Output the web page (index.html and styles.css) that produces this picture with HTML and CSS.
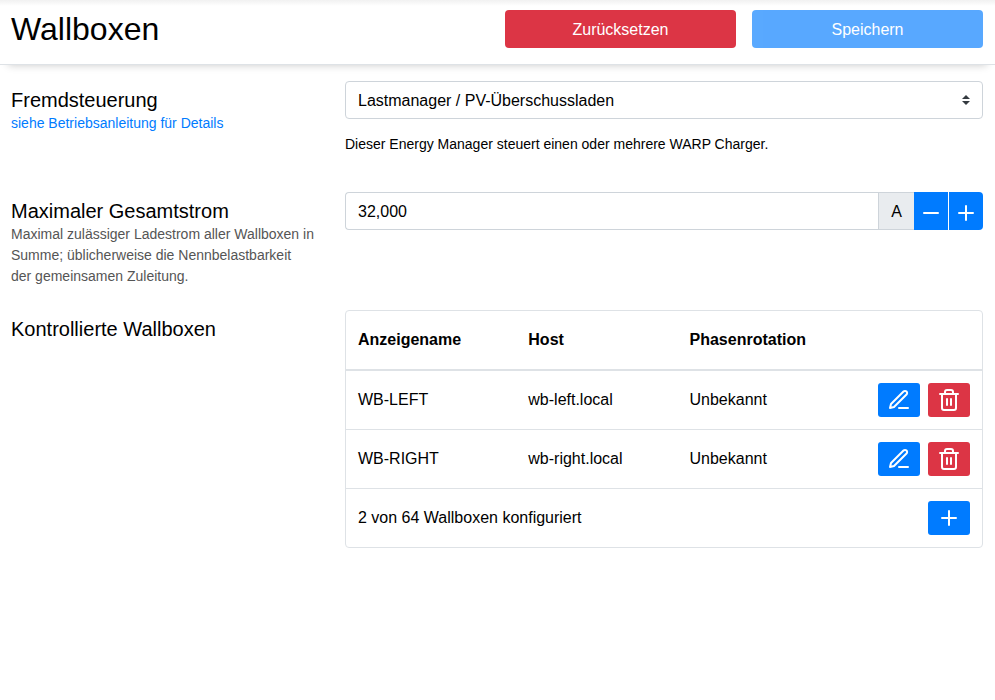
FILE: index.html
```html
<!DOCTYPE html>
<html lang="de">
<head>
<meta charset="utf-8">
<title>Wallboxen</title>
<link rel="stylesheet" href="styles.css">
</head>
<body>
<svg width="0" height="0" class="sprite" aria-hidden="true">
  <symbol id="pen" viewBox="0 0 24 24"><path d="M12 20h9"/><path d="M16.5 3.5a2.121 2.121 0 0 1 3 3L7 19l-4 1 1-4L16.5 3.5z"/></symbol>
  <symbol id="trash" viewBox="0 0 24 24"><path d="M3 6h18M19 6v14a2 2 0 0 1-2 2H7a2 2 0 0 1-2-2V6m3 0V4a2 2 0 0 1 2-2h4a2 2 0 0 1 2 2v2M10 11v6M14 11v6"/></symbol>
  <symbol id="plus" viewBox="0 0 24 24"><path d="M12 5v14M5 12h14"/></symbol>
  <symbol id="minus" viewBox="0 0 24 24"><path d="M5 12h14"/></symbol>
</svg>
<header class="header">
  <h1>Wallboxen</h1>
  <div class="actions">
    <button class="btn danger">Zurücksetzen</button>
    <button class="btn primary disabled">Speichern</button>
  </div>
</header>
<main>
  <section class="row mode">
    <div class="label"><h2>Fremdsteuerung</h2><a class="link" href="#">siehe Betriebsanleitung für Details</a></div>
    <div class="field">
      <div class="control select"><span>Lastmanager / PV-Überschussladen</span>
        <svg width="8" height="10" viewBox="0 0 4 5"><path d="M2 0L0 2h4zm0 5L0 3h4z"/></svg>
      </div>
      <p class="note">Dieser Energy Manager steuert einen oder mehrere WARP Charger.</p>
    </div>
  </section>
  <section class="row current">
    <div class="label"><h2>Maximaler Gesamtstrom</h2><p class="help">Maximal zulässiger Ladestrom aller Wallboxen in Summe; üblicherweise die Nennbelastbarkeit der gemeinsamen Zuleitung.</p></div>
    <div class="field group">
      <div class="control value">32,000</div>
      <div class="unit">A</div>
      <button class="step primary" aria-label="Verringern"><svg class="icon"><use href="#minus"/></svg></button>
      <button class="step primary" aria-label="Erhöhen"><svg class="icon"><use href="#plus"/></svg></button>
    </div>
  </section>
  <section class="row">
    <div class="label"><h2>Kontrollierte Wallboxen</h2></div>
    <div class="field table">
      <div class="tr head"><span>Anzeigename</span><span>Host</span><span>Phasenrotation</span></div>
      <div class="tr"><span>WB-LEFT</span><span>wb-left.local</span><span>Unbekannt</span>
        <div class="tools"><button class="tool primary" aria-label="Bearbeiten"><svg class="icon"><use href="#pen"/></svg></button><button class="tool danger" aria-label="Löschen"><svg class="icon"><use href="#trash"/></svg></button></div></div>
      <div class="tr"><span>WB-RIGHT</span><span>wb-right.local</span><span>Unbekannt</span>
        <div class="tools"><button class="tool primary" aria-label="Bearbeiten"><svg class="icon"><use href="#pen"/></svg></button><button class="tool danger" aria-label="Löschen"><svg class="icon"><use href="#trash"/></svg></button></div></div>
      <div class="tr foot"><span>2 von 64 Wallboxen konfiguriert</span>
        <div class="tools"><button class="tool primary" aria-label="Hinzufügen"><svg class="icon"><use href="#plus"/></svg></button></div></div>
    </div>
  </section>
</main>
</body>
</html>
```
FILE: styles.css
```css
* { box-sizing: border-box; }
body { margin: 0; background: #fff; color: #000; font: 16px/24px "Liberation Sans", Arial, sans-serif; overflow: hidden; }
h1, h2, p { margin: 0; font-weight: 400; }
button { border: 0; padding: 0; font: inherit; color: #fff; }
.sprite { position: absolute; }
.header { height: 65px; padding: 10px 12px 0 11px; display: flex; justify-content: space-between; border-bottom: 1px solid #dee2e6; background: linear-gradient(#f1f1f1, #fff 6px); box-shadow: 0 8px 8px -8px rgba(0, 0, 0, .22); }
h1 { font-size: 32px; line-height: 38px; }
.actions { display: flex; gap: 16px; }
.btn { width: 231px; height: 38px; padding-top: 2px; border-radius: 4px; }
.primary { background: #007bff; }
.danger { background: #dc3545; }
.disabled { opacity: .65; }
main { padding: 16px 12px 0 11px; }
.row { display: grid; grid-template-columns: 304px 638px; column-gap: 30px; }
.mode { height: 111px; }
.current { height: 118px; }
.label { padding-top: 7px; }
h2 { font-size: 20px; line-height: 24px; }
.link, .help, .note { font-size: 14px; line-height: 21px; }
.link, .help { margin-top: 1px; }
.link { display: block; color: #007bff; text-decoration: none; }
.help { color: #555; }
.note { margin-top: 15px; }
.control { height: 38px; border: 1px solid #ced4da; border-radius: 4px; padding: 0 12px; display: flex; align-items: center; justify-content: space-between; }
.select span, .value, .unit { padding-top: 2px; }
.select svg { fill: #343a40; }
.group { display: flex; height: 38px; }
.value { flex: 1; border-right: 0; border-radius: 4px 0 0 4px; }
.unit { width: 36px; border: 1px solid #ced4da; border-right: 0; background: #e9ecef; display: flex; align-items: center; justify-content: center; }
.step { width: 34px; padding-top: 4px; display: flex; align-items: center; justify-content: center; }
.step + .step { margin-left: 1px; border-radius: 0 4px 4px 0; }
.icon { display: block; width: 24px; height: 24px; fill: none; stroke: #fff; stroke-width: 2; stroke-linecap: round; stroke-linejoin: round; }
.table { border: 1px solid #dee2e6; border-radius: 4px; }
.tr { display: grid; grid-template-columns: 170.3px 161.2px 1fr auto; align-items: center; height: 59px; padding: 0 12px; border-top: 1px solid #dee2e6; }
.head { height: 58px; border-top: 0; font-weight: 700; }
.head + .tr { border-top-width: 2px; height: 60px; }
.foot { grid-template-columns: 1fr auto; }
.tools { display: flex; gap: 8px; }
.tool { width: 42px; height: 34px; border-radius: 3px; display: flex; align-items: center; justify-content: center; }
```
